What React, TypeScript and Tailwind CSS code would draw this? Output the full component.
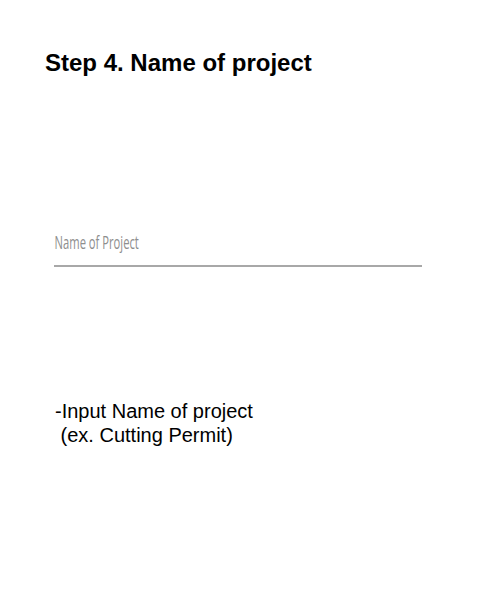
import React from 'react'

const App = () => {
  return (
    <div className="w-full h-[602px] bg-white flex flex-col pt-[49px]" style={{ fontFamily: '"Liberation Sans", Arial, sans-serif' }}>
      <h1 className="pl-[45px] text-[24px] leading-[28px] font-bold text-black">Step 4. Name of project</h1>

      <div className="mt-[153px] ml-[54px] w-[368px] pb-[11px] border-b-2 border-[#a8a8a8]">
        <span className="block h-6 leading-6 pl-px text-[19px] text-[#8e8e8e] origin-left scale-x-[0.59] whitespace-nowrap" style={{ fontFamily: '"Open Sans", "Noto Sans", sans-serif' }}>
          Name of Project
        </span>
      </div>

      <div className="mt-[132px] pl-[55px] text-[20px] leading-6 text-black whitespace-pre">
        <p>-Input Name of project</p>
        <p> (ex. Cutting Permit)</p>
      </div>
    </div>
  )
}

export default App
